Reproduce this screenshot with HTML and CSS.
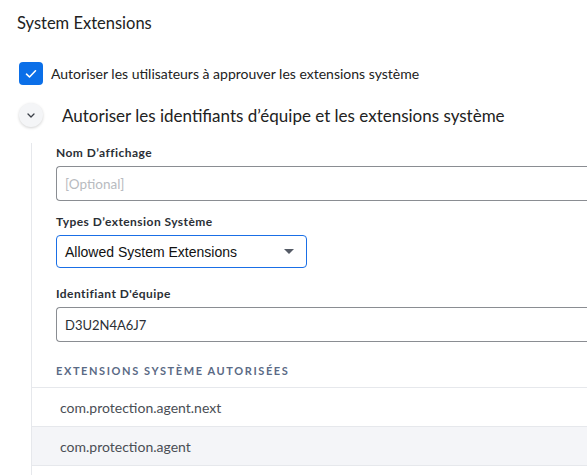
FILE: index.html
```html
<!DOCTYPE html>
<html lang="fr">
<head>
<meta charset="utf-8">
<link rel="stylesheet" href="styles.css">
</head>
<body>
<div class="page">
  <h1 class="title">System Extensions</h1>
  <label class="check-row">
    <span class="checkbox">
      <svg width="12" height="10" viewBox="0 0 12 10"><path d="M1.5 5.2 L4.5 8 L10.5 1.8" fill="none" stroke="#fff" stroke-width="1.6" stroke-linecap="round" stroke-linejoin="round"/></svg>
    </span>
    <span class="check-text">Autoriser les utilisateurs à approuver les extensions système</span>
  </label>
  <div class="section-head">
    <span class="chev">
      <svg width="8" height="5" viewBox="0 0 8 5"><path d="M1 1 L4 4 L7 1" fill="none" stroke="#3a3f47" stroke-width="1.3" stroke-linecap="round" stroke-linejoin="round"/></svg>
    </span>
    <span class="section-title">Autoriser les identifiants d’équipe et les extensions système</span>
  </div>
  <div class="section-body">
    <div class="field">
      <div class="label">Nom D’affichage</div>
      <div class="input placeholder">[Optional]</div>
    </div>
    <div class="field field-select">
      <div class="label">Types D’extension Système</div>
      <div class="select">
        <span>Allowed System Extensions</span>
        <span class="caret"></span>
      </div>
    </div>
    <div class="field">
      <div class="label">Identifiant D'équipe</div>
      <div class="input">D3U2N4A6J7</div>
    </div>
    <div class="list-head">EXTENSIONS SYSTÈME AUTORISÉES</div>
    <div class="list">
      <div class="row">com.protection.agent.next</div>
      <div class="row alt">com.protection.agent</div>
      <div class="row"></div>
    </div>
  </div>
</div>
</body>
</html>
```
FILE: styles.css
```css
html, body {
  margin: 0;
  padding: 0;
  background: #fff;
}
body {
  font-family: "Lato", "Open Sans", sans-serif;
  color: #222;
}
.page {
  width: 587px;
  height: 475px;
  box-sizing: border-box;
  overflow: hidden;
  padding: 12px 0 0 19px;
  display: flex;
  flex-direction: column;
}
.title {
  margin: 0 0 0 -2px;
  font-size: 16.5px;
  font-weight: 400;
  line-height: 22px;
  color: #222;
}
.check-row {
  display: flex;
  align-items: center;
  gap: 8px;
  margin-top: 28px;
}
.checkbox {
  width: 24px;
  height: 23px;
  border-radius: 4px;
  background: #0b6fe8;
  display: flex;
  align-items: center;
  justify-content: center;
  flex: none;
}
.check-text {
  font-size: 14px;
  color: #222;
}
.section-head {
  display: flex;
  align-items: center;
  gap: 19px;
  margin-top: 18px;
}
.chev {
  width: 24px;
  height: 24px;
  border-radius: 50%;
  background: #f4f5f7;
  box-shadow: 0 1px 3px rgba(0,0,0,0.18);
  display: flex;
  align-items: center;
  justify-content: center;
  flex: none;
}
.section-title {
  font-size: 17px;
  color: #222;
}
.section-body {
  flex: 1;
  margin-top: 16px;
  margin-left: 12px;
  border-left: 1px solid #e6e8ec;
  padding-top: 3px;
}
.field {
  padding-left: 24px;
  margin-bottom: 14px;
}
.field-select {
  margin-bottom: 19px;
}
.label {
  font-size: 12px;
  font-weight: 700;
  letter-spacing: 0.45px;
  color: #2b2f36;
  line-height: 14px;
  margin-bottom: 6px;
}
.input {
  height: 35px;
  box-sizing: border-box;
  border: 1px solid #8a8d92;
  border-right: none;
  border-radius: 4px 0 0 4px;
  padding-left: 8px;
  display: flex;
  align-items: center;
  font-size: 13px;
  color: #2b2f36;
}
.input.placeholder {
  font-size: 13.5px;
  color: #b8bbc0;
}
.select {
  width: 251px;
  height: 33px;
  box-sizing: border-box;
  border: 1px solid #1a6fe6;
  border-radius: 4px;
  padding: 0 12px 0 8px;
  display: flex;
  align-items: center;
  justify-content: space-between;
  font-family: "Liberation Sans", Arial, sans-serif;
  font-size: 14px;
  color: #111;
}
.caret {
  width: 0;
  height: 0;
  border-left: 5px solid transparent;
  border-right: 5px solid transparent;
  border-top: 5px solid #555b66;
}
.list-head {
  padding-left: 24px;
  font-size: 11px;
  font-weight: 700;
  letter-spacing: 1.6px;
  color: #5a6a85;
  line-height: 14px;
  margin-top: 22px;
  margin-bottom: 9px;
}
.list {
  border-top: 1px solid #e6e8ec;
}
.row {
  height: 39px;
  box-sizing: border-box;
  border-bottom: 1px solid #e6e8ec;
  padding-left: 28px;
  display: flex;
  align-items: center;
  font-size: 14px;
  color: #4a4e55;
}
.row.alt {
  background: #f4f5f8;
}
```
